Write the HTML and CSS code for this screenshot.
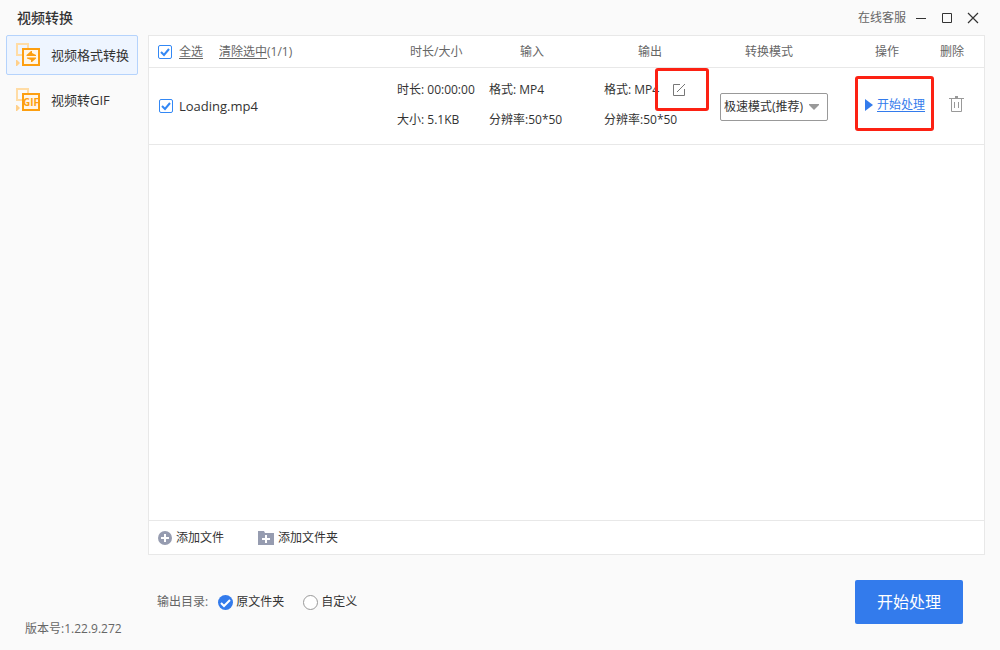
FILE: index.html
```html
<!DOCTYPE html>
<html lang="zh-CN">
<head>
<meta charset="utf-8">
<title>视频转换</title>
<link rel="stylesheet" href="styles.css">
</head>
<body>
<div class="app">
  <header class="titlebar">
    <h1 class="title">视频转换</h1>
    <a class="support" href="#">在线客服</a>
    <div class="window-controls">
      <button type="button" class="icon-button" aria-label="最小化"><svg width="12" height="12" viewBox="0 0 12 12"><path d="M1 6.5h10" stroke="#333"/></svg></button>
      <button type="button" class="icon-button" aria-label="最大化"><svg width="12" height="12" viewBox="0 0 12 12"><path d="M1.5 1.5h9v9h-9z" stroke="#333" fill="none"/></svg></button>
      <button type="button" class="icon-button" aria-label="关闭"><svg width="12" height="12" viewBox="0 0 12 12"><path d="M1 1l10 10M11 1L1 11" stroke="#333" stroke-width="1.2"/></svg></button>
    </div>
  </header>
  <div class="body">
    <aside class="sidebar">
      <nav class="nav">
        <a class="nav-item active" href="#">
          <svg width="24" height="24" viewBox="0 0 24 24"><path d="M6 12H1V1h11v5" fill="none" stroke="#ffdca5" stroke-width="2"/><path d="M0 17h1l3 3-3 3H0z" fill="#ffd08a"/><path d="M7 6h16v16H7z" fill="#fff6e8" stroke="#fd9f10" stroke-width="2"/><path d="M10.500 13v-1l4.500-4h1v2l4 2v1zM20 14.500v1L16 19h-1v-2l-4-1.500v-1z" fill="#fd9f10"/></svg>
          <span>视频格式转换</span>
        </a>
        <a class="nav-item" href="#">
          <svg width="24" height="24" viewBox="0 0 24 24"><path d="M6 12H1V1h11v5" fill="none" stroke="#ffdca5" stroke-width="2"/><path d="M0 17h1l3 3-3 3H0z" fill="#ffd08a"/><path d="M7 6h16v16H7z" fill="#fff6e8" stroke="#fd9f10" stroke-width="2"/><text class="gif-mark" x="15" y="18" text-anchor="middle">GIF</text></svg>
          <span>视频转GIF</span>
        </a>
      </nav>
      <p class="version">版本号:1.22.9.272</p>
    </aside>
    <main class="main">
      <section class="panel">
        <table class="files">
          <colgroup>
            <col>
            <col class="col-time">
            <col class="col-input">
            <col class="col-output">
            <col class="col-mode">
            <col class="col-action">
            <col class="col-delete">
          </colgroup>
          <thead>
            <tr>
              <th>
                <div class="select-all">
                  <input class="check" type="checkbox" id="all" checked>
                  <label for="all" class="underlined">全选</label>
                  <a class="clear" href="#"><span class="underlined">清除选中</span>(1/1)</a>
                </div>
              </th>
              <th class="head-time">时长/大小</th>
              <th class="head-input">输入</th>
              <th class="head-output">输出</th>
              <th class="head-mode">转换模式</th>
              <th class="head-action">操作</th>
              <th class="head-delete">删除</th>
            </tr>
          </thead>
          <tbody>
            <tr>
              <td>
                <div class="file">
                  <input class="check" type="checkbox" id="file1" checked>
                  <label for="file1">Loading.mp4</label>
                </div>
              </td>
              <td class="details"><p class="line">时长: 00:00:00</p><p class="line">大小: 5.1KB</p></td>
              <td class="details"><p class="line">格式: MP4</p><p class="line">分辨率:50*50</p></td>
              <td class="details output">
                <p class="line format">格式: MP4
                  <button type="button" class="icon-button" aria-label="编辑"><svg width="14" height="14" viewBox="0 0 14 14"><path d="M8 1.500H1.500v11h11V6M5 9l8-8" fill="none" stroke="#777"/></svg></button>
                </p>
                <p class="line">分辨率:50*50</p>
                <span class="mark mark-edit"></span>
              </td>
              <td class="mode-cell">
                <div class="mode">
                  <select class="mode-select" aria-label="转换模式"><option>极速模式(推荐)</option></select>
                </div>
              </td>
              <td class="action">
                <a class="start" href="#"><svg width="8" height="12" viewBox="0 0 8 12"><path d="M0 0l8 6-8 6z" fill="#337bec"/></svg><span class="underlined">开始处理</span></a>
                <span class="mark mark-start"></span>
              </td>
              <td class="delete">
                <button type="button" class="icon-button" aria-label="删除"><svg width="15" height="16" viewBox="0 0 15 16"><path d="M0 2.500h15M2.500 3v12.500h10V3M5.500 6v6M9.500 6v6" fill="none" stroke="#999"/><path d="M6 0h3v2H6z" fill="#999"/></svg></button>
              </td>
            </tr>
          </tbody>
        </table>
        <div class="panel-footer">
          <button type="button" class="add"><svg width="14" height="14" viewBox="0 0 14 14"><circle cx="7" cy="7" r="7" fill="#969cb0"/><path d="M3 7h8M7 3v8" stroke="#fff" stroke-width="2"/></svg>添加文件</button>
          <button type="button" class="add"><svg width="16" height="14" viewBox="0 0 16 14"><path d="M0 0h6l1 2h9v12H0z" fill="#969cb0"/><path d="M4 8h8M8 4v8" stroke="#fff" stroke-width="2"/></svg>添加文件夹</button>
        </div>
      </section>
      <footer class="bottom">
        <div class="destination" role="radiogroup" aria-label="输出目录">
          <span class="destination-title">输出目录:</span>
          <input class="radio" type="radio" name="dest" id="source" checked><label for="source">原文件夹</label>
          <input class="radio radio-custom" type="radio" name="dest" id="custom"><label for="custom">自定义</label>
        </div>
        <button type="button" class="primary">开始处理</button>
      </footer>
    </main>
  </div>
</div>
</body>
</html>
```
FILE: styles.css
```css
* { box-sizing: border-box; }
body {
  margin: 0;
  background: #fafafa;
  color: #333;
  font: 12px/16px "Open Sans", "Noto Sans CJK SC", sans-serif;
}
h1, p { margin: 0; }
a { color: inherit; text-decoration: none; }
button, select { font: inherit; color: inherit; }
svg { display: block; flex: none; }
.underlined { text-decoration: underline; text-underline-offset: 2px; }
.icon-button { display: block; padding: 0; border: 0; background: none; }

.app { display: flex; flex-direction: column; min-height: 100vh; }
.titlebar { display: flex; align-items: center; height: 35px; padding: 0 21px 0 17px; }
.title { font-size: 14px; line-height: 20px; font-weight: 500; }
.support { margin-left: auto; color: #666; }
.window-controls { display: flex; gap: 14px; margin-left: 9px; }

.body { display: flex; flex: 1; }
.sidebar { display: flex; flex-direction: column; flex: 0 0 148px; padding: 0 10px 13px 6px; }
.nav { display: flex; flex-direction: column; gap: 5px; }
.nav-item {
  display: flex;
  align-items: center;
  gap: 11px;
  height: 40px;
  padding-left: 9px;
  border: 1px solid transparent;
  border-radius: 2px;
  font-size: 13px;
}
.nav-item.active { background: #eef5ff; border-color: #b5d3fc; }
.gif-mark { font: 700 10px "Open Sans", sans-serif; fill: #fd9f10; }
.version { margin-top: auto; padding-left: 19px; color: #666; }

.main { display: flex; flex: 1; flex-direction: column; min-width: 0; padding-right: 15px; }
.panel { display: flex; flex: 1; flex-direction: column; border: 1px solid #e8e8e8; background: #fff; }
.files { width: 100%; table-layout: fixed; border-collapse: separate; border-spacing: 0; }
.col-time { width: 92px; }
.col-input { width: 115px; }
.col-output { width: 116px; }
.col-mode { width: 135px; }
.col-action { width: 79px; }
.col-delete { width: 50px; }
th, td { padding: 0; border-bottom: 1px solid #e8e8e8; text-align: left; white-space: nowrap; }
th { height: 32px; color: #666; font-weight: 400; }
td { height: 77px; }
.select-all, .file { display: flex; align-items: center; }
.select-all { gap: 7px; padding-left: 9px; }
.file { gap: 6px; padding-left: 10px; font-size: 13px; }
.clear { margin-left: 9px; }
.head-time { padding-left: 13px; }
.head-input { padding-left: 31px; }
.head-output { padding-left: 34px; }
.head-mode { padding-left: 25px; }
.head-action { padding-left: 20px; }
.head-delete { padding-left: 6px; }
.details { padding-bottom: 2px; }
.mode-cell { padding-top: 2px; }
.line { line-height: 30px; }
.format { display: flex; align-items: center; gap: 13px; }

.check, .radio { flex: none; margin: 0; appearance: none; background: #fff center / 100% no-repeat; }
.check { width: 14px; height: 14px; border: 1px solid #3388f5; border-radius: 2px; }
.check:checked { background-image: url("data:image/svg+xml,%3Csvg xmlns='http://www.w3.org/2000/svg' viewBox='0 0 12 12'%3E%3Cpath d='M2 6l3 3 5-6' fill='none' stroke='%233388f5' stroke-width='2'/%3E%3C/svg%3E"); }
.radio { width: 15px; height: 15px; border: 1px solid #999; border-radius: 50%; }
.radio:checked {
  border: 0;
  background-color: #337bec;
  background-image: url("data:image/svg+xml,%3Csvg xmlns='http://www.w3.org/2000/svg' viewBox='0 0 15 15'%3E%3Cpath d='M3 8l3 3 6-6' fill='none' stroke='white' stroke-width='2'/%3E%3C/svg%3E");
}

.mode { width: 108px; }
.mode-select {
  display: block;
  width: 100%;
  height: 28px;
  padding: 0 18px 0 3px;
  border: 1px solid #999;
  border-radius: 2px;
  appearance: none;
  background: #fff url("data:image/svg+xml,%3Csvg xmlns='http://www.w3.org/2000/svg' viewBox='0 0 10 6'%3E%3Cpath d='M0 0h10v1L5 6 0 1z' fill='%23999'/%3E%3C/svg%3E") right 8px center / 10px 6px no-repeat;
}
.output, .action { position: relative; }
.start { display: flex; align-items: center; gap: 4px; padding-left: 10px; color: #337bec; }
.delete { padding-left: 15px; }
.action { padding-bottom: 3px; }
.delete { padding-bottom: 4px; }
.mark { position: absolute; border: 3px solid #fc2113; border-radius: 3px; pointer-events: none; }
.mark-edit { top: 0; left: 51px; width: 54px; height: 43px; }
.mark-start { top: 8px; left: 0; width: 79px; height: 55px; }

.panel-footer { display: flex; gap: 34px; height: 34px; margin-top: auto; padding-left: 9px; border-top: 1px solid #e8e8e8; }
.add { display: flex; align-items: center; gap: 4px; padding: 0; border: 0; background: none; }
.bottom { display: flex; align-items: center; justify-content: space-between; height: 95px; padding: 0 22px 1px 9px; }
.destination { display: flex; align-items: center; gap: 3px; }
.destination-title { margin-right: 7px; color: #666; }
.radio-custom { margin-left: 16px; }
.primary { width: 108px; height: 44px; border: 0; border-radius: 2px; background: #337bec; color: #fff; font-size: 16px; }
```
